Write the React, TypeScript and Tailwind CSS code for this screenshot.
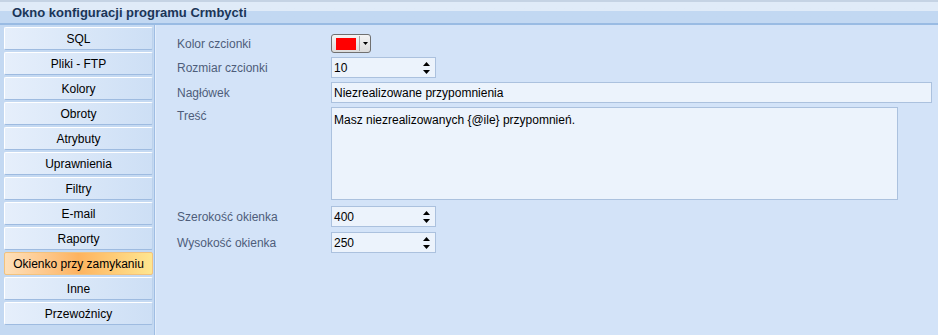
import React from 'react';

const tabs = [
  'SQL',
  'Pliki - FTP',
  'Kolory',
  'Obroty',
  'Atrybuty',
  'Uprawnienia',
  'Filtry',
  'E-mail',
  'Raporty',
  'Okienko przy zamykaniu',
  'Inne',
  'Przewoźnicy',
];

const Spin: React.FC<{ value: string }> = ({ value }) => (
  <div className="flex h-[21px] w-[105px] items-center border border-[#abc1de] bg-[#ecf3fc] pl-[2px] pr-[4px]">
    <span className="flex-1 text-[12px] leading-none text-black">{value}</span>
    <svg width="9" height="14" viewBox="0 0 9 14">
      <path d="M4.5 1 L8 5 L1 5 Z" fill="#000" />
      <path d="M1 9 L8 9 L4.5 13 Z" fill="#000" />
    </svg>
  </div>
);

const Row: React.FC<{ label: string; children: React.ReactNode; className?: string }> = ({
  label,
  children,
  className = 'items-center',
}) => (
  <div className={`flex ${className}`}>
    <div className="w-[154px] shrink-0 text-[12px] text-[#4e5d7a]">{label}</div>
    {children}
  </div>
);

const App: React.FC = () => {
  const active = 'Okienko przy zamykaniu';

  return (
    <div
      className="flex h-[335px] w-[938px] flex-col overflow-hidden bg-[#d3e3f8]"
      style={{ fontFamily: '"Liberation Sans", Arial, sans-serif' }}
    >
      {/* title bar */}
      <div className="flex h-[25px] shrink-0 items-center border-t-2 border-b-2 border-t-[#c5d3e4] border-b-[#99bbe3] bg-gradient-to-b from-[#e0ebf8] from-45% to-[#c2d8f2] to-45% pl-[12px]">
        <span className="text-[13px] font-bold text-[#1b3557]">Okno konfiguracji programu Crmbycti</span>
      </div>

      <div className="flex min-h-0 flex-1">
        {/* left tab list */}
        <div className="flex w-[155px] shrink-0 flex-col gap-[2px] border-r border-[#9fbde3] bg-[#c4d9f2] pl-[4px] pr-[1px] pt-[2px]">
          {tabs.map((t) =>
            t === active ? (
              <div
                key={t}
                className="flex h-[23px] items-center justify-center rounded-[2px] border border-[#f2c27e] bg-gradient-to-r from-[#fde0bb] via-[#fdb35f] to-[#fee690] text-[12px] text-black"
              >
                {t}
              </div>
            ) : (
              <div
                key={t}
                className="flex h-[23px] items-center justify-center rounded-[2px] border border-t-white border-l-white border-r-[#bcd2ec] border-b-[#9ebbe0] bg-gradient-to-r from-[#e6effb] to-[#cddff5] text-[12px] text-black"
              >
                {t}
              </div>
            )
          )}
        </div>

        {/* content */}
        <div className="flex flex-1 flex-col border-l border-[#e4eefb] pl-[21px] pt-[9px] pr-[6px]">
          <div className="flex flex-col gap-[4px]">
            <Row label="Kolor czcionki">
              <div className="flex h-[19px] w-[40px] items-center rounded-[3px] border border-[#707070] bg-gradient-to-b from-[#f4f4f4] to-[#dcdcdc] pl-[4px]">
                <div className="h-[12px] w-[20px] bg-[#ff0000]" />
                <div className="ml-[3px] h-[15px] w-px bg-[#a8a8a8]" />
                <div className="flex flex-1 justify-center">
                  <svg width="5" height="3" viewBox="0 0 5 3">
                    <path d="M0 0 L5 0 L2.5 3 Z" fill="#000" />
                  </svg>
                </div>
              </div>
            </Row>
            <Row label="Rozmiar czcionki">
              <Spin value="10" />
            </Row>
            <Row label="Nagłówek">
              <div className="flex h-[21px] flex-1 items-center border border-[#abc1de] bg-[#ecf3fc] pl-[2px] text-[12px] text-black">
                Niezrealizowane przypomnienia
              </div>
            </Row>
            <Row label="Treść" className="items-start">
              <div className="mr-[34px] h-[93px] flex-1 border border-[#abc1de] bg-[#ecf3fc] pl-[2px] pt-[3px] text-[12px] text-black">
                Masz niezrealizowanych {'{@ile}'} przypomnień.
              </div>
            </Row>
            <div className="mt-[2px]">
              <Row label="Szerokość okienka">
                <Spin value="400" />
              </Row>
            </div>
            <div className="mt-[1px]">
              <Row label="Wysokość okienka">
                <Spin value="250" />
              </Row>
            </div>
          </div>
        </div>
      </div>
    </div>
  );
};

export default App;
